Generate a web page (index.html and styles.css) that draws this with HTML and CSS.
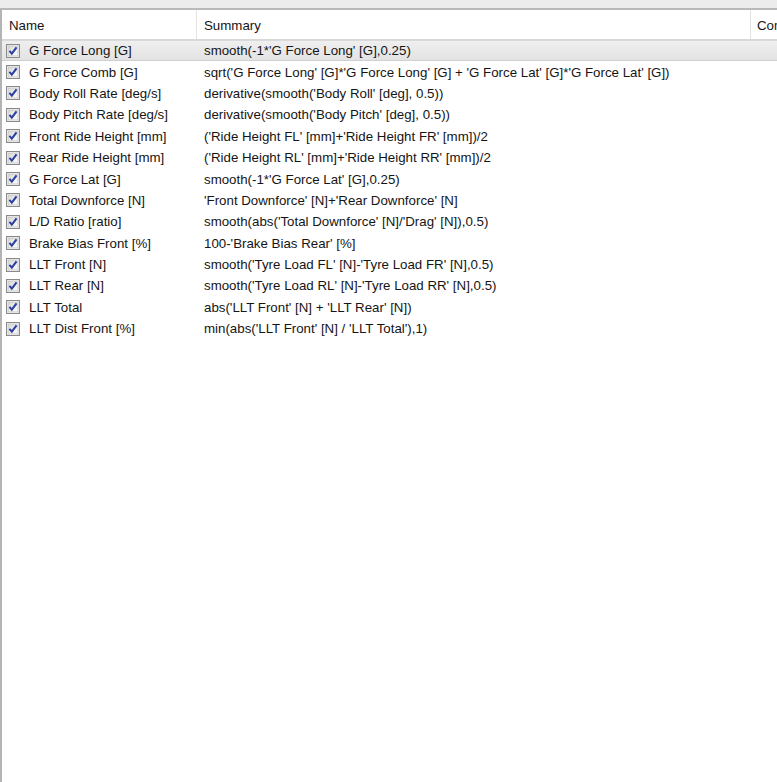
FILE: index.html
```html
<!DOCTYPE html>
<html>
<head>
<meta charset="utf-8">
<link rel="stylesheet" href="styles.css">
</head>
<body>
<div class="topstrip"></div>
<div class="list">
  <div class="header">
    <div class="hcell name">Name</div>
    <div class="hcell summary">Summary</div>
    <div class="hcell extra">Comment</div>
  </div>
  <div class="rows" id="rows"></div>
</div>
<script src="app.js"></script>
</body>
</html>
```
FILE: styles.css
```css
html, body {
  margin: 0;
  padding: 0;
  background: #ffffff;
  width: 777px;
  height: 782px;
  overflow: hidden;
  font-family: "Liberation Sans", Arial, sans-serif;
  font-size: 13.3px;
  color: #151515;
}
.topstrip {
  height: 8px;
  background: #ececec;
  border-bottom: 2px solid #b9b9b9;
}
.list {
  height: 772px;
  border-left: 2px solid #b4b4b4;
  box-sizing: border-box;
}
.header {
  display: grid;
  grid-template-columns: 195px 554px 1fr;
  height: 30px;
  border-bottom: 1px solid #d8d8d8;
  box-sizing: border-box;
}
.hcell {
  display: flex;
  align-items: center;
  border-right: 1px solid #e3e3e3;
  white-space: nowrap;
  overflow: hidden;
  padding-top: 1px;
}
.hcell.name { padding-left: 7px; }
.hcell.summary { padding-left: 7px; }
.hcell.extra { padding-left: 6px; border-right: none; }
.rows { display: flex; flex-direction: column; }
.row {
  display: grid;
  grid-template-columns: 195px 1fr;
  height: 21.4px;
  align-items: center;
  white-space: nowrap;
  box-sizing: border-box;
}
.row.selected {
  background: linear-gradient(#efefef, #e3e3e3);
  border-top: 1px solid #dadada;
  border-bottom: 1px solid #d0d0d0;
}
.ncell { display: flex; align-items: center; }
.cb { width: 14px; height: 14px; margin-left: 4px; margin-right: 9px; flex: none; }
.scell { padding-left: 7px; }
```
FILE: app.js
```js
var data = [
  ["G Force Long [G]", "smooth(-1*'G Force Long' [G],0.25)"],
  ["G Force Comb [G]", "sqrt('G Force Long' [G]*'G Force Long' [G] + 'G Force Lat' [G]*'G Force Lat' [G])"],
  ["Body Roll Rate [deg/s]", "derivative(smooth('Body Roll' [deg], 0.5))"],
  ["Body Pitch Rate [deg/s]", "derivative(smooth('Body Pitch' [deg], 0.5))"],
  ["Front Ride Height [mm]", "('Ride Height FL' [mm]+'Ride Height FR' [mm])/2"],
  ["Rear Ride Height [mm]", "('Ride Height RL' [mm]+'Ride Height RR' [mm])/2"],
  ["G Force Lat [G]", "smooth(-1*'G Force Lat' [G],0.25)"],
  ["Total Downforce [N]", "'Front Downforce' [N]+'Rear Downforce' [N]"],
  ["L/D Ratio [ratio]", "smooth(abs('Total Downforce' [N]/'Drag' [N]),0.5)"],
  ["Brake Bias Front [%]", "100-'Brake Bias Rear' [%]"],
  ["LLT Front [N]", "smooth('Tyre Load FL' [N]-'Tyre Load FR' [N],0.5)"],
  ["LLT Rear [N]", "smooth('Tyre Load RL' [N]-'Tyre Load RR' [N],0.5)"],
  ["LLT Total", "abs('LLT Front' [N] + 'LLT Rear' [N])"],
  ["LLT Dist Front [%]", "min(abs('LLT Front' [N] / 'LLT Total'),1)"]
];
var cb = '<svg class="cb" viewBox="0 0 13 13"><defs><linearGradient id="g" x1="0" y1="0" x2="1" y2="1"><stop offset="0" stop-color="#d6d6d6"/><stop offset="1" stop-color="#ffffff"/></linearGradient></defs><rect x="0.5" y="0.5" width="12" height="12" fill="#f4f4f4" stroke="#8a8a8a"/><rect x="2" y="2" width="9" height="9" fill="url(#g)" stroke="#c4c4c4" stroke-width="0.6"/><path d="M3.2 6.4 L5.4 9 L9.8 3.2" fill="none" stroke="#2c3f9e" stroke-width="1.9" stroke-linejoin="miter"/></svg>';
var html = "";
data.forEach(function (d, i) {
  html += '<div class="row' + (i === 0 ? ' selected' : '') + '"><div class="ncell">' + cb +
    '<span class="ntext"></span></div><div class="scell"></div></div>';
});
var rows = document.getElementById("rows");
rows.innerHTML = html;
var r = rows.querySelectorAll(".row");
data.forEach(function (d, i) {
  r[i].querySelector(".ntext").textContent = d[0];
  r[i].querySelector(".scell").textContent = d[1];
});
```
